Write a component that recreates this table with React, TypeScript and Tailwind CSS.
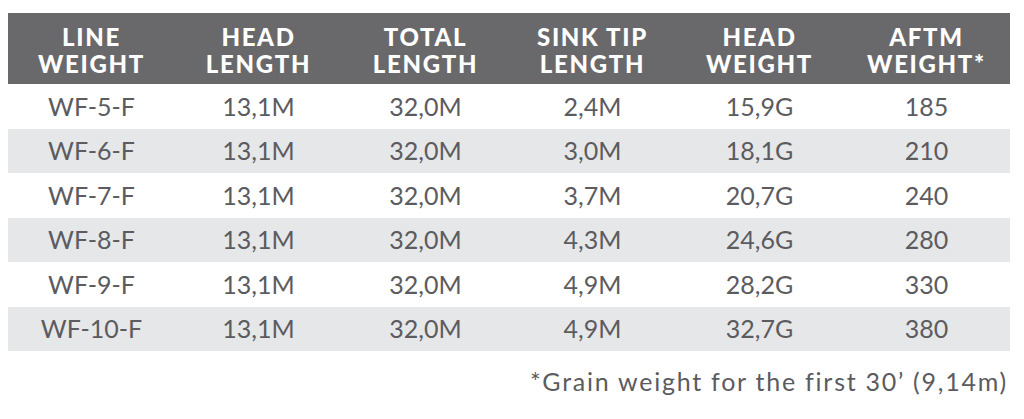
const headers = [
  ['LINE', 'WEIGHT'],
  ['HEAD', 'LENGTH'],
  ['TOTAL', 'LENGTH'],
  ['SINK TIP', 'LENGTH'],
  ['HEAD', 'WEIGHT'],
  ['AFTM', 'WEIGHT*'],
]

const rows = [
  ['WF-5-F', '13,1M', '32,0M', '2,4M', '15,9G', '185'],
  ['WF-6-F', '13,1M', '32,0M', '3,0M', '18,1G', '210'],
  ['WF-7-F', '13,1M', '32,0M', '3,7M', '20,7G', '240'],
  ['WF-8-F', '13,1M', '32,0M', '4,3M', '24,6G', '280'],
  ['WF-9-F', '13,1M', '32,0M', '4,9M', '28,2G', '330'],
  ['WF-10-F', '13,1M', '32,0M', '4,9M', '32,7G', '380'],
]

export default function App() {
  return (
    <div className="w-[1024px] h-[419px] bg-white pt-[13px] pl-[8px]" style={{ fontFamily: 'Lato, "Open Sans", sans-serif' }}>
      <div className="w-[1002px]">
        <div className="grid grid-cols-6 h-[71px] bg-[#69696b] items-center pt-[2px]">
          {headers.map((h, i) => (
            <div key={i} className="flex flex-col items-center text-white font-black text-[24px] leading-[27px] tracking-[0.07em]">
              <span>{h[0]}</span>
              <span>{h[1]}</span>
            </div>
          ))}
        </div>
        {rows.map((r, i) => (
          <div key={i} className={`grid grid-cols-6 h-[44.5px] items-center ${i % 2 === 1 ? 'bg-[#e6e7e8]' : 'bg-white'}`}>
            {r.map((c, j) => (
              <div key={j} className="text-center text-[#5b5b60] text-[25px]">{c}</div>
            ))}
          </div>
        ))}
        <div className="text-right pr-[2px] pt-[12px] text-[#5b5b60] text-[25px] tracking-[0.07em]">*Grain weight for the first 30’ (9,14m)</div>
      </div>
    </div>
  )
}
